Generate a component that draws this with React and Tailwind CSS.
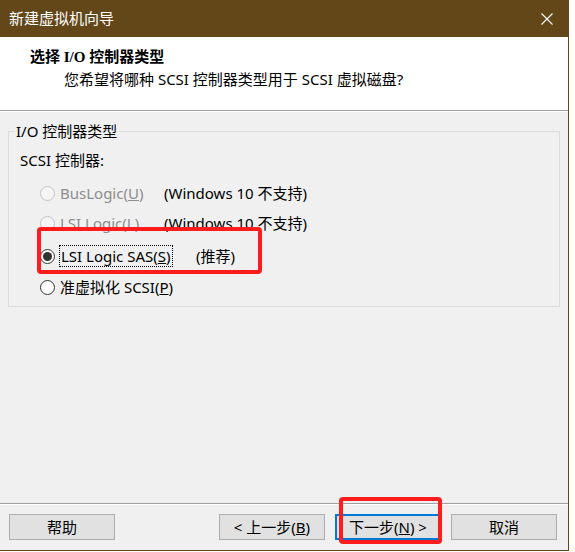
import React from 'react';

const Radio = ({ checked, disabled }) => (
    <span
        className={`flex h-[15px] w-[15px] shrink-0 items-center justify-center rounded-full border ${
            disabled ? 'border-[#c4c4c4] bg-[#f5f5f5]' : 'border-[#333333] bg-white'
        }`}
    >
        {checked && <span className="h-[9px] w-[9px] rounded-full bg-[#333333]"></span>}
    </span>
);

const Btn = ({ children, focused }) => (
    <div
        className={`flex h-[26px] w-[106px] items-center justify-center bg-[#e1e1e1] text-[15px] text-black ${
            focused ? 'border-2 border-[#0078d7]' : 'border border-[#adadad]'
        }`}
    >
        {children}
    </div>
);

const App = () => {
    return (
        <div className="h-[552px] w-[575px] bg-white font-['Noto_Sans','Noto_Sans_CJK_SC',sans-serif]">
            <div className="relative flex h-[551px] w-[569px] flex-col border-r border-b border-[#634719]">
                {/* Title bar */}
                <div className="flex h-[37px] shrink-0 items-center justify-between bg-[#634719] pl-[9px] pr-[15px] text-[15px] text-white">
                    <span>新建虚拟机向导</span>
                    <svg width="12" height="12" viewBox="0 0 12 12">
                        <path d="M0.5 0.5L11.5 11.5M11.5 0.5L0.5 11.5" stroke="white" strokeWidth="1.1" />
                    </svg>
                </div>

                {/* Header */}
                <div className="h-[73px] shrink-0 bg-white pl-[30px] pt-[10px] text-black">
                    <div className="text-[15px] font-bold leading-[20px] font-['Liberation_Serif','Noto_Sans_CJK_SC',serif]">
                        选择 I/O 控制器类型
                    </div>
                    <div className="mt-[2px] pl-[34px] text-[15px] leading-[20px]">
                        您希望将哪种 SCSI 控制器类型用于 SCSI 虚拟磁盘?
                    </div>
                </div>
                <div className="h-px shrink-0 bg-[#a0a0a0]"></div>
                <div className="h-px shrink-0 bg-white"></div>

                {/* Body */}
                <div className="flex-1 bg-[#f0f0f0] px-[8px] pt-[9px]">
                    <fieldset className="h-[186px] border border-[#dcdcdc] pl-[5px] text-[15px] leading-[20px] text-black">
                        <legend className="px-[2px]">I/O 控制器类型</legend>
                        <div className="ml-[6px] mt-[9px]">SCSI 控制器:</div>

                        <div className="ml-[26px] mt-[13px] flex h-[20px] items-center">
                            <Radio disabled />
                            <span className="ml-[5px] w-[104px] text-[#8d8d8d]">
                                BusLogic(<span className="underline">U</span>)
                            </span>
                            <span>(Windows 10 不支持)</span>
                        </div>
                        <div className="ml-[26px] mt-[10px] flex h-[20px] items-center">
                            <Radio disabled />
                            <span className="ml-[5px] w-[104px] text-[#8d8d8d]">
                                LSI Logic(<span className="underline">L</span>)
                            </span>
                            <span>(Windows 10 不支持)</span>
                        </div>
                        <div className="ml-[26px] mt-[13px] flex h-[20px] items-center">
                            <Radio checked />
                            <span className="ml-[4px] w-[137px]">
                                <span className="border border-dotted border-black px-px">
                                    LSI Logic SAS(<span className="underline">S</span>)
                                </span>
                            </span>
                            <span>(推荐)</span>
                        </div>
                        <div className="ml-[26px] mt-[11px] flex h-[20px] items-center">
                            <Radio />
                            <span className="ml-[5px]">
                                准虚拟化 SCSI(<span className="underline">P</span>)
                            </span>
                        </div>
                    </fieldset>
                </div>

                {/* Footer */}
                <div className="h-px shrink-0 bg-[#a0a0a0]"></div>
                <div className="h-px shrink-0 bg-white"></div>
                <div className="flex h-[45px] shrink-0 bg-[#f0f0f0] pl-[9px] pr-[11px] pt-[9px]">
                    <Btn>帮助</Btn>
                    <div className="flex-1"></div>
                    <div className="flex gap-[10px]">
                        <Btn>
                            &lt; 上一步(<span className="underline">B</span>)
                        </Btn>
                        <Btn focused>
                            下一步(<span className="underline">N</span>) &gt;
                        </Btn>
                        <Btn>取消</Btn>
                    </div>
                </div>

                {/* Annotation boxes */}
                <div className="absolute left-[37px] top-[227px] h-[47px] w-[225px] rounded-[4px] border-4 border-[#ff1c1c]"></div>
                <div className="absolute left-[339px] top-[497px] h-[47px] w-[103px] rounded-[4px] border-4 border-[#ff1c1c]"></div>
            </div>
        </div>
    );
};

export default App;
